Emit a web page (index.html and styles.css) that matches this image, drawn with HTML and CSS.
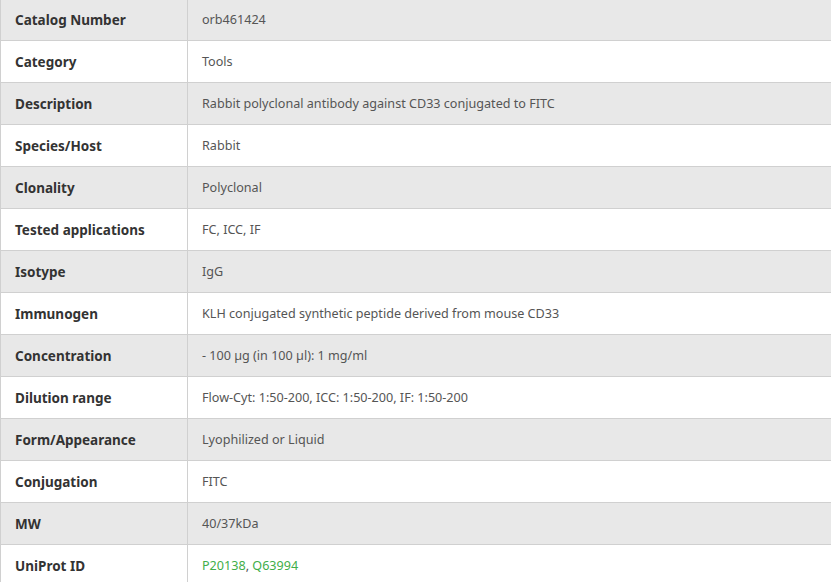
FILE: index.html
```html
<!DOCTYPE html>
<html>
<head>
<meta charset="utf-8">
<link rel="stylesheet" href="styles.css">
</head>
<body>
<table class="spec">
<tbody>
<tr class="alt"><th>Catalog Number</th><td>orb461424</td></tr>
<tr><th>Category</th><td>Tools</td></tr>
<tr class="alt"><th>Description</th><td>Rabbit polyclonal antibody against CD33 conjugated to FITC</td></tr>
<tr><th>Species/Host</th><td>Rabbit</td></tr>
<tr class="alt"><th>Clonality</th><td>Polyclonal</td></tr>
<tr><th>Tested applications</th><td>FC, ICC, IF</td></tr>
<tr class="alt"><th>Isotype</th><td>IgG</td></tr>
<tr><th>Immunogen</th><td>KLH conjugated synthetic peptide derived from mouse CD33</td></tr>
<tr class="alt"><th>Concentration</th><td>- 100 µg (in 100 µl): 1 mg/ml</td></tr>
<tr><th>Dilution range</th><td>Flow-Cyt: 1:50-200, ICC: 1:50-200, IF: 1:50-200</td></tr>
<tr class="alt"><th>Form/Appearance</th><td>Lyophilized or Liquid</td></tr>
<tr><th>Conjugation</th><td>FITC</td></tr>
<tr class="alt"><th>MW</th><td>40/37kDa</td></tr>
<tr><th>UniProt ID</th><td><a class="link" href="#">P20138</a>, <a class="link" href="#">Q63994</a></td></tr>
</tbody>
</table>
</body>
</html>
```
FILE: styles.css
```css
html, body {
  margin: 0;
  padding: 0;
  background: #fff;
}
body {
  font-family: "Noto Sans", "Open Sans", sans-serif;
  overflow: hidden;
}
.spec {
  width: 100%;
  border-collapse: collapse;
  margin-top: -2px;
}
.spec tr {
  height: 42px;
}
.spec tr.alt {
  background: #e8e8e8;
}
.spec th,
.spec td {
  border: 1px solid #d0d0d0;
  vertical-align: middle;
  padding: 0 14px;
}
.spec th {
  width: 158px;
  text-align: left;
  font-weight: 700;
  font-size: 13.5px;
  color: #333;
  padding-left: 14px;
}
.spec td {
  font-size: 12.6px;
  color: #555;
  border-right: none;
}
.link {
  color: #3fae49;
  text-decoration: none;
}
```
